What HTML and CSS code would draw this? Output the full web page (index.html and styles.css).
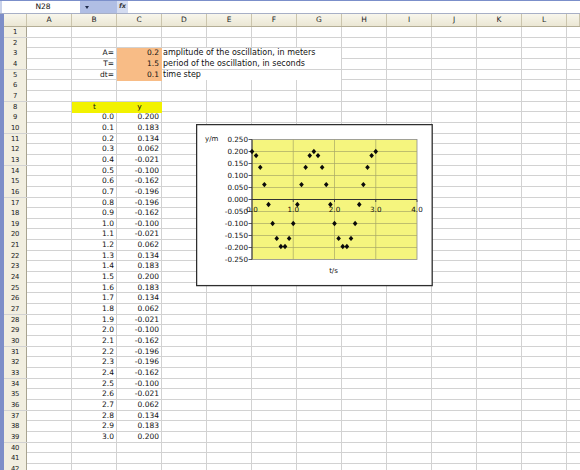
FILE: index.html
```html
<!DOCTYPE html>
<html>
<head>
<meta charset="utf-8">
<link rel="stylesheet" href="styles.css">
</head>
<body>
<div class="app">
  <div class="fbar">
    <div class="namebox">N28</div>
    <div class="dd"><span class="arrow"></span></div>
    <div class="fx">fx</div>
    <div class="formula"></div>
  </div>
  <div class="sheet">
    <div class="hdr"><div></div><div>A</div><div>B</div><div>C</div><div>D</div><div>E</div><div>F</div><div>G</div><div>H</div><div>I</div><div>J</div><div>K</div><div>L</div><div></div></div>
    <div class="row"><div class="rh">1</div></div>
    <div class="row"><div class="rh">2</div></div>
    <div class="row"><div class="rh">3</div><div></div><div class="n">A=</div><div class="n org">0.2</div><div class="note">amplitude of the oscillation, in meters</div></div>
    <div class="row"><div class="rh">4</div><div></div><div class="n">T=</div><div class="n org">1.5</div><div class="note">period of the oscillation, in seconds</div></div>
    <div class="row"><div class="rh">5</div><div></div><div class="n">dt=</div><div class="n org">0.1</div><div class="note">time step</div></div>
    <div class="row"><div class="rh">6</div></div>
    <div class="row"><div class="rh">7</div></div>
    <div class="row"><div class="rh">8</div><div></div><div class="yel">t</div><div class="yel">y</div></div>
    <div class="row"><div class="rh">9</div><div></div><div class="n">0.0</div><div class="n">0.200</div></div>
    <div class="row"><div class="rh">10</div><div></div><div class="n">0.1</div><div class="n">0.183</div></div>
    <div class="row"><div class="rh">11</div><div></div><div class="n">0.2</div><div class="n">0.134</div></div>
    <div class="row"><div class="rh">12</div><div></div><div class="n">0.3</div><div class="n">0.062</div></div>
    <div class="row"><div class="rh">13</div><div></div><div class="n">0.4</div><div class="n">-0.021</div></div>
    <div class="row"><div class="rh">14</div><div></div><div class="n">0.5</div><div class="n">-0.100</div></div>
    <div class="row"><div class="rh">15</div><div></div><div class="n">0.6</div><div class="n">-0.162</div></div>
    <div class="row"><div class="rh">16</div><div></div><div class="n">0.7</div><div class="n">-0.196</div></div>
    <div class="row"><div class="rh">17</div><div></div><div class="n">0.8</div><div class="n">-0.196</div></div>
    <div class="row"><div class="rh">18</div><div></div><div class="n">0.9</div><div class="n">-0.162</div></div>
    <div class="row"><div class="rh">19</div><div></div><div class="n">1.0</div><div class="n">-0.100</div></div>
    <div class="row"><div class="rh">20</div><div></div><div class="n">1.1</div><div class="n">-0.021</div></div>
    <div class="row"><div class="rh">21</div><div></div><div class="n">1.2</div><div class="n">0.062</div></div>
    <div class="row"><div class="rh">22</div><div></div><div class="n">1.3</div><div class="n">0.134</div></div>
    <div class="row"><div class="rh">23</div><div></div><div class="n">1.4</div><div class="n">0.183</div></div>
    <div class="row"><div class="rh">24</div><div></div><div class="n">1.5</div><div class="n">0.200</div></div>
    <div class="row"><div class="rh">25</div><div></div><div class="n">1.6</div><div class="n">0.183</div></div>
    <div class="row"><div class="rh">26</div><div></div><div class="n">1.7</div><div class="n">0.134</div></div>
    <div class="row"><div class="rh">27</div><div></div><div class="n">1.8</div><div class="n">0.062</div></div>
    <div class="row"><div class="rh">28</div><div></div><div class="n">1.9</div><div class="n">-0.021</div></div>
    <div class="row"><div class="rh">29</div><div></div><div class="n">2.0</div><div class="n">-0.100</div></div>
    <div class="row"><div class="rh">30</div><div></div><div class="n">2.1</div><div class="n">-0.162</div></div>
    <div class="row"><div class="rh">31</div><div></div><div class="n">2.2</div><div class="n">-0.196</div></div>
    <div class="row"><div class="rh">32</div><div></div><div class="n">2.3</div><div class="n">-0.196</div></div>
    <div class="row"><div class="rh">33</div><div></div><div class="n">2.4</div><div class="n">-0.162</div></div>
    <div class="row"><div class="rh">34</div><div></div><div class="n">2.5</div><div class="n">-0.100</div></div>
    <div class="row"><div class="rh">35</div><div></div><div class="n">2.6</div><div class="n">-0.021</div></div>
    <div class="row"><div class="rh">36</div><div></div><div class="n">2.7</div><div class="n">0.062</div></div>
    <div class="row"><div class="rh">37</div><div></div><div class="n">2.8</div><div class="n">0.134</div></div>
    <div class="row"><div class="rh">38</div><div></div><div class="n">2.9</div><div class="n">0.183</div></div>
    <div class="row"><div class="rh">39</div><div></div><div class="n">3.0</div><div class="n">0.200</div></div>
    <div class="row"><div class="rh">40</div></div>
    <div class="row"><div class="rh">41</div></div>
    <div class="row"><div class="rh">42</div></div>
    <div class="row"><div class="rh">43</div></div>
  </div>

  <svg class="chart" width="237" height="163" viewBox="0 0 237 163">
    <defs>
      <path id="d" d="M0 -2.7L2.3 0L0 2.7L-2.3 0Z" fill="#0a0a0a"/>
    </defs>
    <rect x="0.6" y="0.6" width="235.6" height="161" fill="#fff" stroke="#2e2e2e" stroke-width="1.3"/>
    <rect x="56" y="15.5" width="165" height="120" fill="#f5f57e" stroke="#8c8c8c" stroke-width="0.8"/>
    <path d="M56 27.5H221M56 39.5H221M56 51.5H221M56 63.5H221M56 87.5H221M56 99.5H221M56 111.5H221M56 123.5H221M97.25 15.5V135.5M138.5 15.5V135.5M179.75 15.5V135.5" stroke="#a8a866" stroke-width="0.7" fill="none"/>
    <path d="M56 15.5V135.5M56 75.5H221" stroke="#333" stroke-width="1" fill="none"/>
    <path d="M52.5 15.5H56M52.5 27.5H56M52.5 39.5H56M52.5 51.5H56M52.5 63.5H56M52.5 75.5H56M52.5 87.5H56M52.5 99.5H56M52.5 111.5H56M52.5 123.5H56M52.5 135.5H56M97.25 75.5V78M138.5 75.5V78M179.75 75.5V78M221 75.5V78" stroke="#333" stroke-width="0.8" fill="none"/>
    <g class="ylab" text-anchor="end">
      <text x="52" y="18">0.250</text>
      <text x="52" y="30">0.200</text>
      <text x="52" y="42">0.150</text>
      <text x="52" y="54">0.100</text>
      <text x="52" y="66">0.050</text>
      <text x="52" y="78">0.000</text>
      <text x="52" y="90">-0.050</text>
      <text x="52" y="102">-0.100</text>
      <text x="52" y="114">-0.150</text>
      <text x="52" y="126">-0.200</text>
      <text x="52" y="138">-0.250</text>
    </g>
    <g class="xlab" text-anchor="middle">
      <text x="56" y="88">0.0</text>
      <text x="97.25" y="88">1.0</text>
      <text x="138.5" y="88">2.0</text>
      <text x="179.75" y="88">3.0</text>
      <text x="221" y="88">4.0</text>
    </g>
    <text class="atitle" x="9" y="17">y/m</text>
    <text class="atitle" x="137.5" y="149" text-anchor="middle">t/s</text>
    <g>
      <use href="#d" x="56" y="27.5"/>
      <use href="#d" x="60.13" y="31.58"/>
      <use href="#d" x="64.25" y="43.34"/>
      <use href="#d" x="68.38" y="60.62"/>
      <use href="#d" x="72.5" y="80.54"/>
      <use href="#d" x="76.63" y="99.5"/>
      <use href="#d" x="80.75" y="114.38"/>
      <use href="#d" x="84.88" y="122.54"/>
      <use href="#d" x="89" y="122.54"/>
      <use href="#d" x="93.13" y="114.38"/>
      <use href="#d" x="97.25" y="99.5"/>
      <use href="#d" x="101.38" y="80.54"/>
      <use href="#d" x="105.5" y="60.62"/>
      <use href="#d" x="109.63" y="43.34"/>
      <use href="#d" x="113.75" y="31.58"/>
      <use href="#d" x="117.88" y="27.5"/>
      <use href="#d" x="122" y="31.58"/>
      <use href="#d" x="126.13" y="43.34"/>
      <use href="#d" x="130.25" y="60.62"/>
      <use href="#d" x="134.38" y="80.54"/>
      <use href="#d" x="138.5" y="99.5"/>
      <use href="#d" x="142.63" y="114.38"/>
      <use href="#d" x="146.75" y="122.54"/>
      <use href="#d" x="150.88" y="122.54"/>
      <use href="#d" x="155" y="114.38"/>
      <use href="#d" x="159.13" y="99.5"/>
      <use href="#d" x="163.25" y="80.54"/>
      <use href="#d" x="167.38" y="60.62"/>
      <use href="#d" x="171.5" y="43.34"/>
      <use href="#d" x="175.63" y="31.58"/>
      <use href="#d" x="179.75" y="27.5"/>
    </g>
  </svg>
</div>
</body>
</html>
```
FILE: styles.css
```css
* {
  box-sizing: border-box;
  margin: 0;
  padding: 0;
}

body {
  width: 580px;
  height: 470px;
  overflow: hidden;
  background: #fff;
  font-family: "DejaVu Sans", Verdana, sans-serif;
  font-size: 7.5px;
  color: #111;
}

.app {
  position: relative;
  width: 580px;
  height: 470px;
  overflow: hidden;
}

/* formula bar */
.fbar {
  display: flex;
  height: 14px;
  border-top: 1px solid #7b8fca;
  border-bottom: 1px solid #a7afc6;
  background: #fff;
}

.namebox {
  width: 80px;
  padding-left: 4px;
  text-align: center;
  line-height: 11px;
  background: #fff;
  border-left: 2px solid #c9d2ea;
}

.dd {
  width: 37px;
  display: flex;
  align-items: center;
  padding-left: 5px;
  background: #b0bee4;
}

.arrow {
  width: 0;
  height: 0;
  border-left: 2.5px solid transparent;
  border-right: 2.5px solid transparent;
  border-top: 3px solid #1e2a4a;
}

.fx {
  width: 11px;
  padding-left: 2px;
  font-style: italic;
  font-weight: bold;
  font-size: 6.5px;
  line-height: 11px;
  color: #3a3a3a;
  background: #d4dcf1;
}

.formula {
  flex: 1;
}

/* sheet */
.sheet {
  border-left: 4px solid #7d8ec8;
}

.hdr {
  display: grid;
  grid-template-columns: 23px repeat(12, 45px) 1fr;
  height: 13px;
  background: linear-gradient(#f8f6ec, #ebe7d4);
  border-bottom: 1px solid #b4ae96;
}

.hdr > div {
  border-right: 1px solid #cbc5ad;
  text-align: center;
  line-height: 12px;
  color: #222;
}

.row {
  display: grid;
  grid-template-columns: 23px repeat(12, 45px) 1fr;
  height: 10.66px;
  line-height: 10.4px;
  border-bottom: 1px solid #d2d2d2;
  background: repeating-linear-gradient(90deg, transparent 0 44px, #d2d2d2 44px 45px) 23px 0 repeat-x;
  white-space: nowrap;
}

.rh {
  background: #f1eee0;
  border-right: 1px solid #a8a390;
  text-align: center;
  font-size: 6.8px;
  letter-spacing: -0.3px;
  color: #222;
}

.n {
  text-align: right;
  padding-right: 3px;
}

.org {
  background: #f8bc86;
  box-shadow: 0 1px 0 #f8bc86;
}

.yel {
  text-align: center;
  background: #f2f200;
  box-shadow: 0 1px 0 #f2f200;
}

.note {
  grid-column: span 4;
  margin-right: 1px;
  padding-left: 1px;
  background: #fff;
  font-size: 8px;
}

/* chart (floats over the grid) */
.chart {
  position: absolute;
  left: 196px;
  top: 124px;
  font-family: "DejaVu Sans", Verdana, sans-serif;
}

.ylab text,
.xlab text {
  font-size: 7.2px;
  fill: #111;
}

.atitle {
  font-size: 7px;
  fill: #111;
}
```
